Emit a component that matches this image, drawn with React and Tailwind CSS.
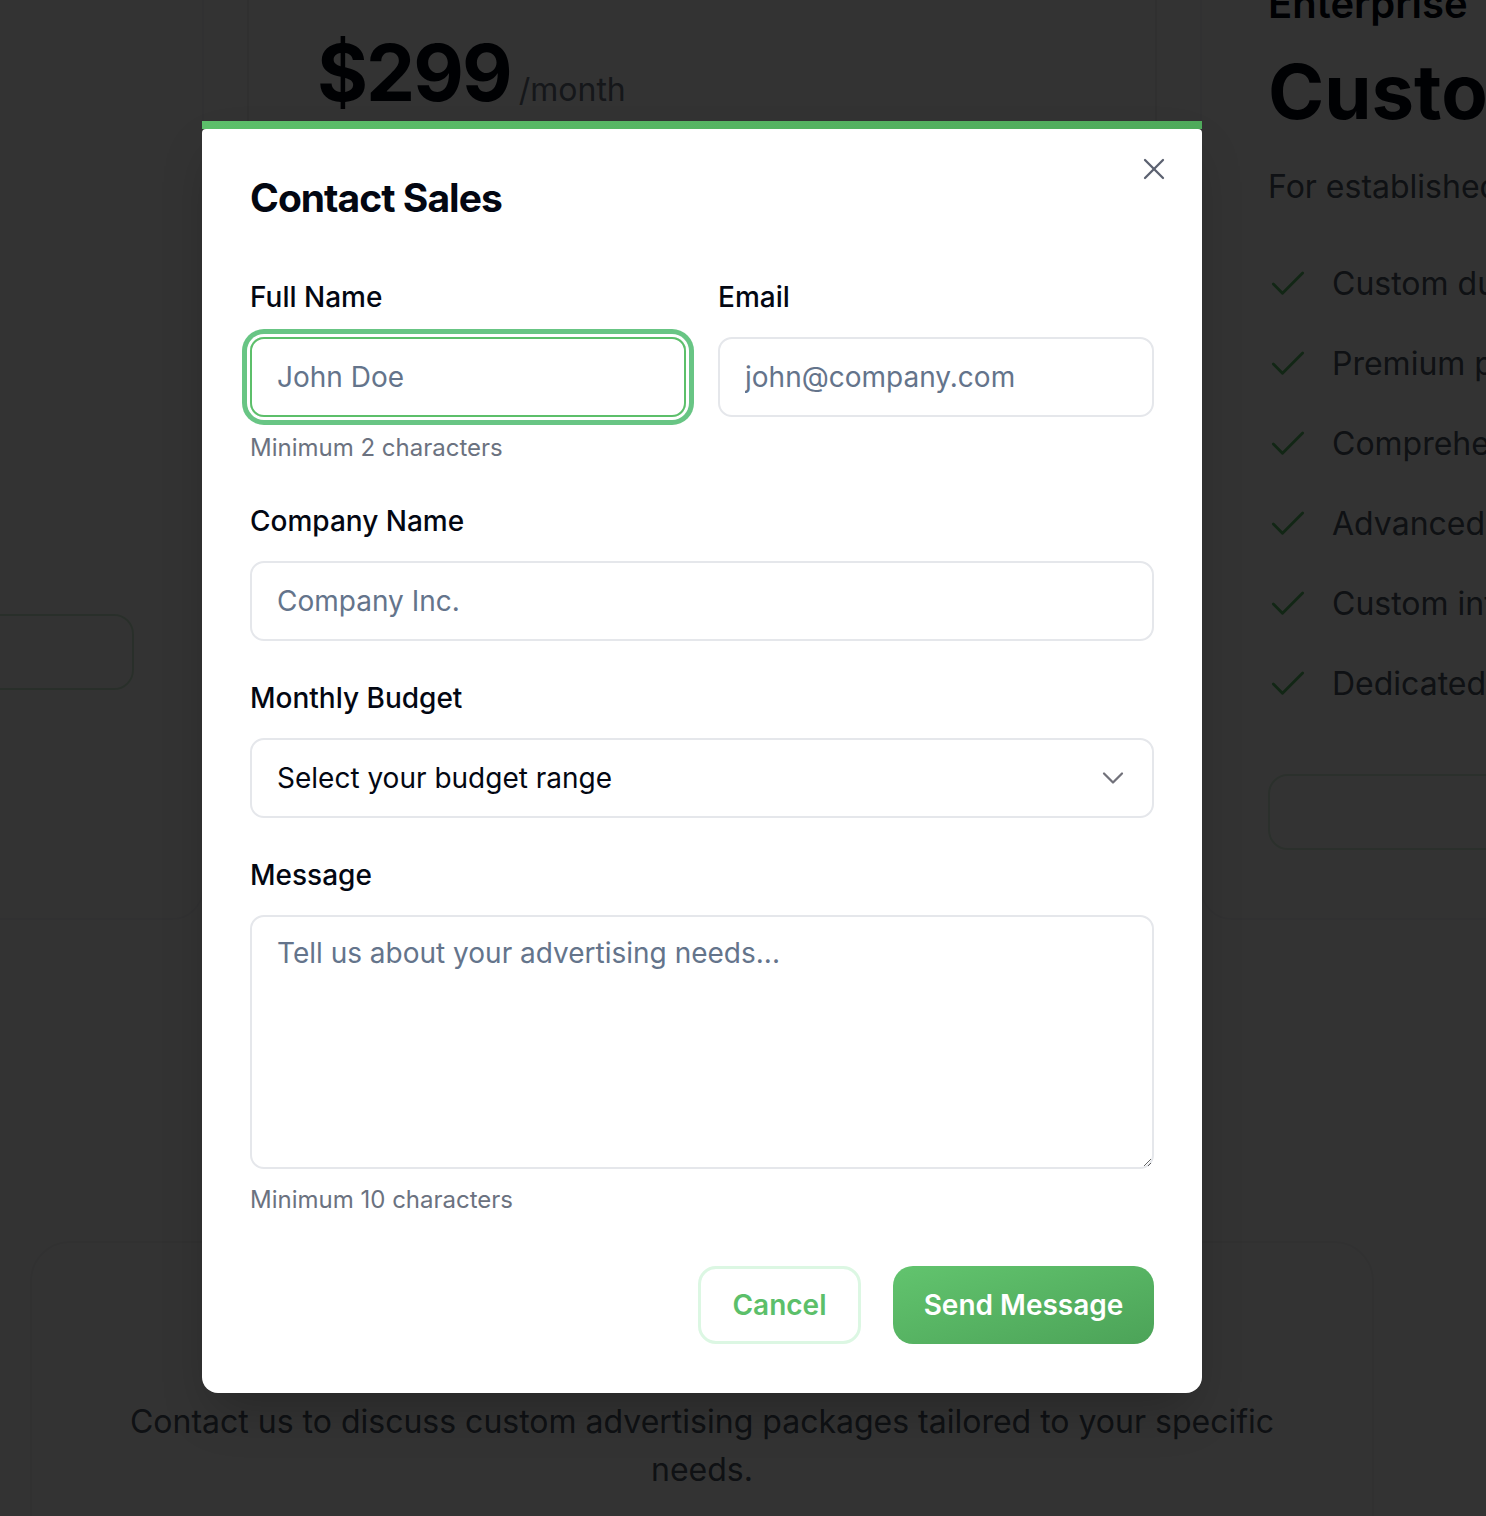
import { X, ChevronDown, Check } from "lucide-react";

const features = [
  "Custom duration campaigns",
  "Premium placement options",
  "Comprehensive analytics",
  "Advanced targeting",
  "Custom integrations",
  "Dedicated account manager",
];

function Label({ children }) {
  return (
    <label className="block text-[28px] leading-[40px] font-medium text-[#030712] mb-5">
      {children}
    </label>
  );
}

export default function App() {
  return (
    <div className="relative h-[1516px] w-full overflow-hidden bg-white font-['Inter',sans-serif]">
      {/* Pricing cards behind the dialog */}
      <div className="flex gap-[43px] ml-[-706px] mt-[-60px]">
        <div className="w-[910px] shrink-0 rounded-[32px] border-2 border-[#f6f6f7] px-[68px] pt-[672px] pb-[68px]">
          <div className="h-[76px] w-full rounded-[20px] border-2 border-[#5cbf6a]/30" />
        </div>

        <div className="w-[910px] shrink-0 rounded-[32px] border-2 border-[#eeeff1] px-[68px] pt-[92px] pb-[68px]">
          <div className="flex items-baseline">
            <span className="text-[78px] leading-none font-bold tracking-tight text-[#030712]">
              $299
            </span>
            <span className="ml-2 text-[32px] text-[#6b7280]">/month</span>
          </div>
        </div>

        <div className="w-[910px] shrink-0 rounded-[32px] border-2 border-[#f6f6f7] pl-[66px] pr-[68px] pt-[38px] pb-[68px]">
          <p className="text-[40px] leading-[48px] font-semibold text-[#030712]">Enterprise</p>
          <p className="mt-[25px] text-[76px] leading-none font-bold text-[#030712] whitespace-nowrap">
            Custom
          </p>
          <p className="mt-[34px] text-[32px] leading-[48px] text-[#4b5563] whitespace-nowrap">
            For established businesses and agencies
          </p>
          <ul className="mt-[49px] flex flex-col gap-8">
            {features.map((f) => (
              <li key={f} className="flex items-center gap-[22px] h-12">
                <Check size={44} strokeWidth={1.6} className="text-[#5cbf6a] -ml-[2px]" />
                <span className="text-[32px] leading-[48px] text-[#4b5563] whitespace-nowrap">{f}</span>
              </li>
            ))}
          </ul>
          <div className="mt-[66px] h-[76px] w-full rounded-[20px] border-2 border-[#5cbf6a]/25" />
        </div>
      </div>

      <div className="ml-[30px] mt-[321px] w-[1344px] rounded-[40px] border-2 border-[#f3f4f6] pt-[155px] pb-[120px]">
        <p className="mx-auto max-w-[1190px] text-center text-[32px] leading-[48px] text-[#4b5563]">
          Contact us to discuss custom advertising packages tailored to your specific needs.
        </p>
      </div>

      {/* Overlay */}
      <div className="absolute inset-0 bg-black/80" />

      {/* Dialog */}
      <div className="absolute left-[202px] top-[121px] w-[1000px] rounded-[16px] shadow-2xl">
        <div className="h-2 bg-gradient-to-r from-[#5cbf6a] to-[#4faa5b]" />
        <div className="relative rounded-t-[4px] rounded-b-[16px] bg-white px-12 pt-[45px] pb-[49px]">
          <button className="absolute right-[30px] top-[22px] text-[#5b6170]">
            <X size={36} strokeWidth={1.5} />
          </button>

          <h2 className="text-[39px] leading-[48px] font-bold tracking-tight text-[#030712]">
            Contact Sales
          </h2>

          <div className="mt-[55px] grid grid-cols-2 gap-8">
            <div>
              <Label>Full Name</Label>
              <input
                placeholder="John Doe"
                className="h-20 w-full rounded-[14px] border-2 border-[#5cbf6a] px-[25px] text-[28px] text-[#030712] outline-none shadow-[0_0_0_3px_#ffffff,0_0_0_8px_#68c584] placeholder:text-[#64748b]"
              />
              <p className="mt-[15px] text-[24px] leading-8 text-[#6b7280]">Minimum 2 characters</p>
            </div>
            <div>
              <Label>Email</Label>
              <input
                placeholder="john@company.com"
                className="h-20 w-full rounded-[14px] border-2 border-[#e5e7eb] px-[25px] text-[28px] text-[#030712] outline-none placeholder:text-[#64748b]"
              />
            </div>
          </div>

          <div className="mt-[37px]">
            <Label>Company Name</Label>
            <input
              placeholder="Company Inc."
              className="h-20 w-full rounded-[14px] border-2 border-[#e5e7eb] px-[25px] text-[28px] text-[#030712] outline-none placeholder:text-[#64748b]"
            />
          </div>

          <div className="mt-[37px]">
            <Label>Monthly Budget</Label>
            <button className="flex h-20 w-full items-center justify-between rounded-[14px] border-2 border-[#e5e7eb] pl-[25px] pr-[21px] text-left">
              <span className="text-[28px] text-[#030712]">Select your budget range</span>
              <ChevronDown size={36} strokeWidth={1.5} className="text-[#71717a]" />
            </button>
          </div>

          <div className="mt-[37px]">
            <Label>Message</Label>
            <textarea
              placeholder="Tell us about your advertising needs..."
              className="block h-[254px] w-full resize-y rounded-[14px] border-2 border-[#e5e7eb] px-[25px] py-[16px] text-[28px] leading-[40px] text-[#030712] outline-none placeholder:text-[#64748b]"
            />
            <p className="mt-[15px] text-[24px] leading-8 text-[#6b7280]">Minimum 10 characters</p>
          </div>

          <div className="mt-[50px] flex justify-end gap-8">
            <button className="h-[78px] w-[163px] rounded-[18px] border-[3px] border-[#dcf7e3] text-[28px] font-semibold text-[#5cbf6a]">
              Cancel
            </button>
            <button className="h-[78px] w-[261px] rounded-[20px] bg-gradient-to-br from-[#62c46e] to-[#4ca358] text-[28px] font-semibold text-white">
              Send Message
            </button>
          </div>
        </div>
      </div>
    </div>
  );
}
